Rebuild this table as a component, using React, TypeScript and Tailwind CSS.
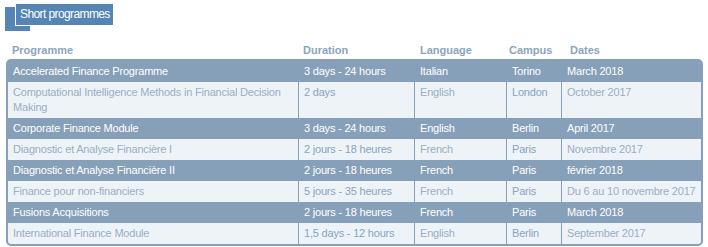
const ROWS = [
  ['Accelerated Finance Programme', '3 days - 24 hours', 'Italian', 'Torino', 'March 2018'],
  ['Computational Intelligence Methods in Financial Decision Making', '2 days', 'English', 'London', 'October 2017'],
  ['Corporate Finance Module', '3 days - 24 hours', 'English', 'Berlin', 'April 2017'],
  ['Diagnostic et Analyse Financière I', '2 jours - 18 heures', 'French', 'Paris', 'Novembre 2017'],
  ['Diagnostic et Analyse Financière II', '2 jours - 18 heures', 'French', 'Paris', 'février 2018'],
  ['Finance pour non-financiers', '5 jours - 35 heures', 'French', 'Paris', 'Du 6 au 10 novembre 2017'],
  ['Fusions Acquisitions', '2 jours - 18 heures', 'French', 'Paris', 'March 2018'],
  ['International Finance Module', '1,5 days - 12 hours', 'English', 'Berlin', 'September 2017'],
]

const COLS = 'grid grid-cols-[290px_116px_92px_55px_140px]'

export default function App() {
  return (
    <div className="w-[708px] h-[247px] bg-white text-[11px] leading-[15px] font-['Liberation_Sans',Arial,sans-serif]">
      {/* Title badge */}
      <div className="relative h-[31px] pt-[7px] pl-[5px]">
        <div className="w-[25px] h-[24px] bg-[#5485b5]" />
        <div className="absolute left-[15px] top-[4px] h-[22px] w-[98px] bg-[#5485b5] border-l border-b border-white pl-[4px] text-[12px] leading-[20px] tracking-[-0.6px] text-white">
          Short programmes
        </div>
      </div>

      {/* Column headings */}
      <div className={`${COLS} mt-[12px] ml-[8px] pb-[1px] font-bold text-[#8ba4bd]`}>
        <div className="pl-[4px]">Programme</div>
        <div className="pl-[5px]">Duration</div>
        <div className="pl-[6px]">Language</div>
        <div className="pl-[3px]">Campus</div>
        <div className="pl-[9px]">Dates</div>
      </div>

      {/* Table */}
      <div className="ml-[6px] w-[697px] border-2 border-[#87a0b9] rounded-[5px] bg-[#87a0b9] overflow-hidden tracking-[-0.2px]">
        {ROWS.map((row, i) => {
          const dark = i % 2 === 0
          return (
            <div key={i} className={`${COLS} ${dark ? 'text-white' : 'bg-[#eef3f8] text-[#9aaec4]'}`}>
              {row.map((cell, j) => (
                <div
                  key={j}
                  className={`py-[3px] ${j === 0 ? 'pl-[5px] pr-[6px]' : 'pl-[5px] border-l border-[#87a0b9]'} ${
                    !dark && (j === 1 || j === 3) ? 'text-[#88a4c2]' : ''
                  }`}
                >
                  {cell}
                </div>
              ))}
            </div>
          )
        })}
      </div>
    </div>
  )
}
